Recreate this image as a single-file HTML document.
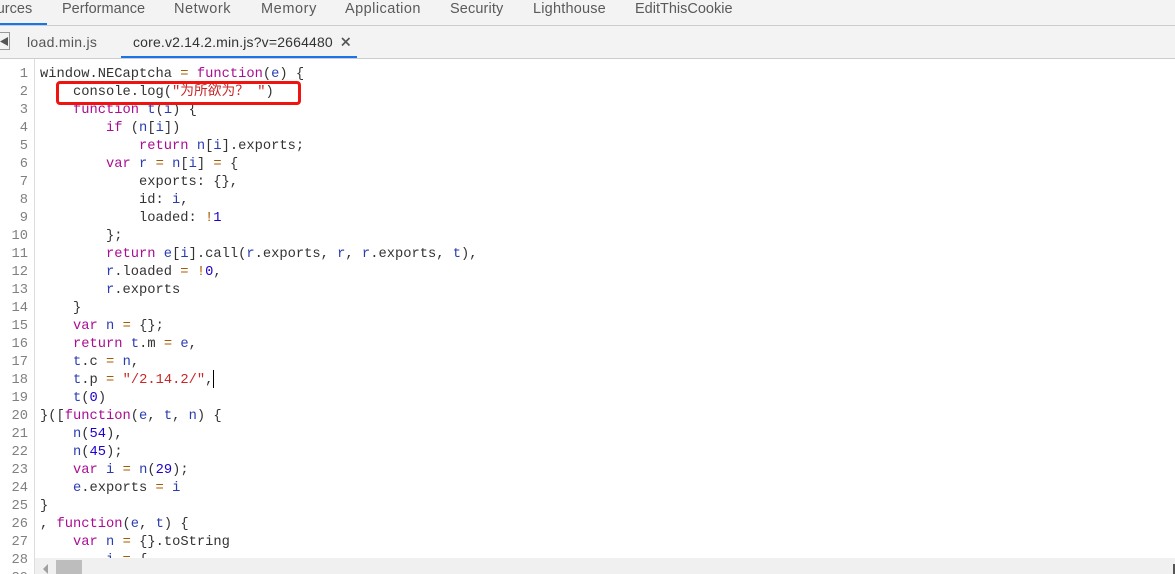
<!DOCTYPE html>
<html><head><meta charset="utf-8">
<style>
html,body{margin:0;padding:0;background:#fff}
body{width:1175px;height:574px;position:relative;overflow:hidden;font-family:"Liberation Sans","Noto Sans CJK SC",sans-serif}
.abs{position:absolute}
#tb{left:0;top:0;width:1175px;height:25px;background:#f3f3f3;border-bottom:1px solid #ccc}
#tb2{left:0;top:26px;width:1175px;height:32px;background:#f3f3f3;border-bottom:1px solid #ccc}
.t{position:absolute;top:0;font-size:14.5px;line-height:18px;color:#5a5a5a;white-space:nowrap}
.l{position:absolute;left:0;height:18px;line-height:18px;font-family:"Liberation Mono","Noto Sans CJK SC",monospace;font-size:13.75px;white-space:pre;color:#333}
.n{position:absolute;left:0;width:28px;text-align:right;height:18px;line-height:18px;font-family:"Liberation Mono",monospace;font-size:13.75px;color:#808080}
#g{left:0;top:59px;width:34px;height:515px;background:#fff;border-right:1px solid #ddd}
#c{left:40px;top:0;width:1135px;height:558px;overflow:hidden}
b{font-weight:normal}
.k{color:#aa0d91}.v{color:#2a3db0}.o{color:#a85a00}.s{color:#c82829}.d{color:#1c00cf}
</style></head><body>
<div id="c" class="abs">
<div class="l" style="top:66px">window.NECaptcha <b class="o">=</b> <b class="k">function</b>(<b class="v">e</b>) {</div>
<div class="l" style="top:84px">    console.log(<b class="s">"为所欲为？ "</b>)</div>
<div class="l" style="top:102px">    <b class="k">function</b> <b class="v">t</b>(<b class="v">i</b>) {</div>
<div class="l" style="top:120px">        <b class="k">if</b> (<b class="v">n</b>[<b class="v">i</b>])</div>
<div class="l" style="top:138px">            <b class="k">return</b> <b class="v">n</b>[<b class="v">i</b>].exports;</div>
<div class="l" style="top:156px">        <b class="k">var</b> <b class="v">r</b> <b class="o">=</b> <b class="v">n</b>[<b class="v">i</b>] <b class="o">=</b> {</div>
<div class="l" style="top:174px">            exports: {},</div>
<div class="l" style="top:192px">            id: <b class="v">i</b>,</div>
<div class="l" style="top:210px">            loaded: <b class="o">!</b><b class="d">1</b></div>
<div class="l" style="top:228px">        };</div>
<div class="l" style="top:246px">        <b class="k">return</b> <b class="v">e</b>[<b class="v">i</b>].call(<b class="v">r</b>.exports, <b class="v">r</b>, <b class="v">r</b>.exports, <b class="v">t</b>),</div>
<div class="l" style="top:264px">        <b class="v">r</b>.loaded <b class="o">=</b> <b class="o">!</b><b class="d">0</b>,</div>
<div class="l" style="top:282px">        <b class="v">r</b>.exports</div>
<div class="l" style="top:300px">    }</div>
<div class="l" style="top:318px">    <b class="k">var</b> <b class="v">n</b> <b class="o">=</b> {};</div>
<div class="l" style="top:336px">    <b class="k">return</b> <b class="v">t</b>.m <b class="o">=</b> <b class="v">e</b>,</div>
<div class="l" style="top:354px">    <b class="v">t</b>.c <b class="o">=</b> <b class="v">n</b>,</div>
<div class="l" style="top:372px">    <b class="v">t</b>.p <b class="o">=</b> <b class="s">"/2.14.2/"</b>,</div>
<div class="l" style="top:390px">    <b class="v">t</b>(<b class="d">0</b>)</div>
<div class="l" style="top:408px">}([<b class="k">function</b>(<b class="v">e</b>, <b class="v">t</b>, <b class="v">n</b>) {</div>
<div class="l" style="top:426px">    <b class="v">n</b>(<b class="d">54</b>),</div>
<div class="l" style="top:444px">    <b class="v">n</b>(<b class="d">45</b>);</div>
<div class="l" style="top:462px">    <b class="k">var</b> <b class="v">i</b> <b class="o">=</b> <b class="v">n</b>(<b class="d">29</b>);</div>
<div class="l" style="top:480px">    <b class="v">e</b>.exports <b class="o">=</b> <b class="v">i</b></div>
<div class="l" style="top:498px">}</div>
<div class="l" style="top:516px">, <b class="k">function</b>(<b class="v">e</b>, <b class="v">t</b>) {</div>
<div class="l" style="top:534px">    <b class="k">var</b> <b class="v">n</b> <b class="o">=</b> {}.toString</div>
<div class="l" style="top:552px">        <b class="v">i</b> <b class="o">=</b> {</div>
</div>
<div id="g" class="abs"></div>
<div class="n" style="top:66px">1</div><div class="n" style="top:84px">2</div><div class="n" style="top:102px">3</div><div class="n" style="top:120px">4</div><div class="n" style="top:138px">5</div><div class="n" style="top:156px">6</div><div class="n" style="top:174px">7</div><div class="n" style="top:192px">8</div><div class="n" style="top:210px">9</div><div class="n" style="top:228px">10</div><div class="n" style="top:246px">11</div><div class="n" style="top:264px">12</div><div class="n" style="top:282px">13</div><div class="n" style="top:300px">14</div><div class="n" style="top:318px">15</div><div class="n" style="top:336px">16</div><div class="n" style="top:354px">17</div><div class="n" style="top:372px">18</div><div class="n" style="top:390px">19</div><div class="n" style="top:408px">20</div><div class="n" style="top:426px">21</div><div class="n" style="top:444px">22</div><div class="n" style="top:462px">23</div><div class="n" style="top:480px">24</div><div class="n" style="top:498px">25</div><div class="n" style="top:516px">26</div><div class="n" style="top:534px">27</div><div class="n" style="top:552px">28</div>
<div class="n" style="top:570px;height:4px;overflow:hidden">29</div>
<div id="tb" class="abs">
<div class="t" style="left:-21px">Sources</div>
<div class="t" style="left:62px">Performance</div>
<div class="t" style="left:174px;letter-spacing:.55px">Network</div>
<div class="t" style="left:261px;letter-spacing:.6px">Memory</div>
<div class="t" style="left:345px;letter-spacing:.45px">Application</div>
<div class="t" style="left:450px;letter-spacing:.12px">Security</div>
<div class="t" style="left:533px;letter-spacing:.2px">Lighthouse</div>
<div class="t" style="left:635px">EditThisCookie</div>
<div class="abs" style="left:0;top:23px;width:47px;height:2px;background:#1a73e8"></div>
</div>
<div id="tb2" class="abs">
<div class="abs" style="left:-3px;top:6px;width:11px;height:16px;border:1px solid #999;box-sizing:content-box"></div>
<svg class="abs" style="left:0;top:10px" width="9" height="11"><path d="M0 5.5L8 1V10Z" fill="#555"/></svg>
<div class="t" style="left:27px;top:7px;font-size:14px;letter-spacing:.3px;color:#555">load.min.js</div>
<div class="t" style="left:133px;top:7px;font-size:14px;letter-spacing:.17px;color:#333">core.v2.14.2.min.js?v=2664480</div>
<svg class="abs" style="left:341px;top:11px" width="10" height="10"><path d="M1 1L8.5 8.5M8.5 1L1 8.5" stroke="#555" stroke-width="1.6"/></svg>
<div class="abs" style="left:121px;top:30px;width:236px;height:2px;background:#1a73e8"></div>
</div>
<div class="abs" style="left:213px;top:370px;width:1px;height:18px;background:#000"></div>
<div class="abs" style="left:56px;top:81px;width:245px;height:24px;box-sizing:border-box;border:3px solid #f01410;border-radius:4px"></div>
<div class="abs" style="left:35px;top:558px;width:1140px;height:16px;background:#f0f0f0"></div>
<svg class="abs" style="left:43px;top:564px" width="6" height="10"><path d="M0 5L5 0V10Z" fill="#a0a0a0"/></svg>
<div class="abs" style="left:56px;top:560px;width:26px;height:14px;background:#bdbdbd"></div>
<div class="abs" style="left:1173px;top:564px;width:2px;height:10px;background:#555"></div>
</body></html>
